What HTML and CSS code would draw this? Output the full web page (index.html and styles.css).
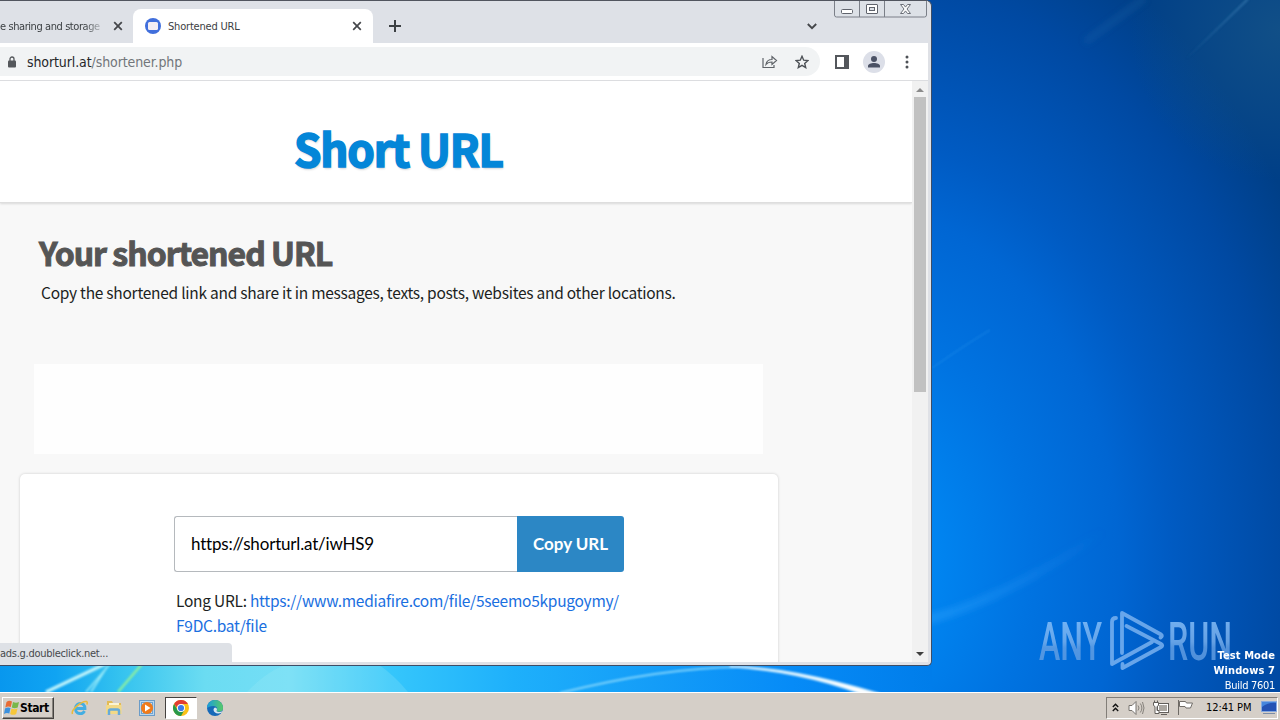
FILE: index.html
```html
<!DOCTYPE html>
<html lang="en">
<head>
  <meta charset="utf-8">
  <title>Shortened URL</title>
  <link rel="stylesheet" href="styles.css">
</head>
<body>
  <div class="desktop">
    <svg class="wallpaper" width="1280" height="692" viewBox="0 0 1280 692">
      <defs>
        <linearGradient id="strip" gradientUnits="userSpaceOnUse" x1="0" y1="0" x2="932" y2="0">
          <stop offset="0" stop-color="#0897ee"/>
          <stop offset="0.06" stop-color="#10a4f2"/>
          <stop offset="0.13" stop-color="#35c3ef"/>
          <stop offset="0.22" stop-color="#6bdcf2"/>
          <stop offset="0.31" stop-color="#74def6"/>
          <stop offset="0.42" stop-color="#35c6fb"/>
          <stop offset="0.55" stop-color="#1eb0fb"/>
          <stop offset="0.7" stop-color="#149df8"/>
          <stop offset="0.85" stop-color="#068bf7"/>
          <stop offset="1" stop-color="#007dea"/>
        </linearGradient>
        <radialGradient id="sky" gradientUnits="userSpaceOnUse" cx="0" cy="0" r="1" gradientTransform="translate(860 560) scale(517 704)">
          <stop offset="0" stop-color="#008af6"/>
          <stop offset="0.14" stop-color="#0085f1"/>
          <stop offset="0.33" stop-color="#0073e1"/>
          <stop offset="0.5" stop-color="#0066d3"/>
          <stop offset="0.6" stop-color="#005bc3"/>
          <stop offset="0.83" stop-color="#0049a2"/>
          <stop offset="0.97" stop-color="#003f87"/>
        </radialGradient>
        <filter id="soft"><feGaussianBlur stdDeviation="0.8"/></filter>
        <filter id="softer" x="-20%" y="-20%" width="140%" height="140%"><feGaussianBlur stdDeviation="3"/></filter>
        <linearGradient id="beam" gradientUnits="userSpaceOnUse" x1="930" y1="0" x2="1105" y2="0">
          <stop offset="0" stop-color="#38a8ff"/>
          <stop offset="1" stop-color="#38a8ff" stop-opacity="0"/>
        </linearGradient>
        <linearGradient id="ray" gradientUnits="userSpaceOnUse" x1="1185" y1="60" x2="1248" y2="0">
          <stop offset="0" stop-color="#4b8fc3" stop-opacity="0"/>
          <stop offset="1" stop-color="#4b8fc3"/>
        </linearGradient>
        <radialGradient id="corner" gradientUnits="userSpaceOnUse" cx="1280" cy="30" r="150">
          <stop offset="0" stop-color="#155387" stop-opacity="0.8"/>
          <stop offset="1" stop-color="#155387" stop-opacity="0"/>
        </radialGradient>
      </defs>
      <rect width="1280" height="692" fill="url(#sky)"/>
      <rect x="0" y="660" width="932" height="32" fill="url(#strip)"/>
      <rect x="1130" y="0" width="150" height="180" fill="url(#corner)"/>
      <g fill="none" filter="url(#softer)">
        <path d="M1085 42 L1145 -2" stroke="#3b87bd" stroke-width="6" opacity="0.18"/>
        <path d="M925 620 Q1000 602 1110 528" stroke="url(#beam)" stroke-width="9" opacity="0.4"/>
      </g>
      <g fill="none" filter="url(#soft)">
        <path d="M1185 60 L1248 -1" stroke="url(#ray)" stroke-width="2" opacity="0.5"/>
        <path d="M932 368 Q965 345 990 330" stroke="#3aa5f2" stroke-width="1.5" opacity="0.25"/>
        <path d="M46 692 L105 664" stroke="#bff3fb" stroke-width="3.500"/>
        <path d="M86 692 L110 664 M91 692 L107 667" stroke="#9cecf8" stroke-width="1.500"/>
        <path d="M118 692 L142 664" stroke="#8df0a0" stroke-width="2.500"/>
        <path d="M560 693 Q660 668 740 667" stroke="#7fd3fc" stroke-width="2"/>
        <path d="M730 666.500 Q790 667 880 694 L862 694 Q800 671 730 666.500" fill="#fff" stroke="#dff5ff" stroke-width="1.500"/>
      </g>
      <path d="M247 692 Q270 668 290 664 L378 664 Q395 676 408 692 Z" fill="#a5ecf8" opacity="0.22"/>
    </svg>

    <div class="window">
      <div class="tabstrip">
        <div class="tab tab-left">
          <span class="tab-title faded">e sharing and storage</span>
          <svg width="10" height="10" viewBox="0 0 10 10"><path d="M1.2 1.2l7.6 7.6M8.8 1.2l-7.6 7.6" stroke="#45474b" stroke-width="1.8"/></svg>
        </div>
        <div class="tab tab-active">
          <svg width="16" height="16" viewBox="0 0 16 16"><circle cx="8" cy="8" r="8" fill="#416fdc"/><rect x="3" y="4" width="10" height="8" rx="1.5" fill="#f4eef4"/></svg>
          <span class="tab-title">Shortened URL</span>
          <svg width="10" height="10" viewBox="0 0 10 10"><path d="M1.2 1.2l7.6 7.6M8.8 1.2l-7.6 7.6" stroke="#45474b" stroke-width="1.7"/></svg>
        </div>
        <svg class="new-tab" width="12" height="12" viewBox="0 0 12 12"><path d="M6 0v12M0 6h12" stroke="#3c4043" stroke-width="2"/></svg>
        <svg class="tab-search" width="10" height="7" viewBox="0 0 10 7"><path d="M.8 1L5 5.2 9.2 1" fill="none" stroke="#45474b" stroke-width="1.9"/></svg>
        <svg class="caption" width="94" height="18" viewBox="0 0 94 18">
          <path d="M.5 0v15q0 2 2 2h88q2 0 2-2V0M25.500 0v17M50.500 0v17" fill="#dde1e7" stroke="#7b7f88"/>
          <rect x="7.500" y="9.500" width="11" height="4" rx="1" fill="#fff" stroke="#5f636c"/>
          <path d="M32.500 5q0-.5.500-.500h10q.5 0 .5.500v8q0 .5-.5.500h-10q-.5 0-.5-.5z" fill="#fff" stroke="#5f636c"/>
          <rect x="35.500" y="7.500" width="5" height="3" fill="#dde1e7" stroke="#5f636c"/>
          <path d="M66.500 4.500h3l2 2.600 2-2.600h3l-3.500 4.500 3.500 4.500h-3l-2-2.600-2 2.600h-3l3.500-4.500z" fill="#fff" stroke="#6b6f78"/>
        </svg>
      </div>

      <div class="toolbar">
        <div class="omnibox">
          <svg width="8" height="12" viewBox="0 0 8 12"><path d="M2 5V3a2 2 0 0 1 4 0v2" fill="none" stroke="#54575b" stroke-width="1.3"/><rect y="4.500" width="8" height="7" rx="1" fill="#54575b"/></svg>
          <span class="address"><b>shorturl.at</b>/shortener.php</span>
          <svg class="share" width="16" height="14" viewBox="0 0 16 14"><path d="M1 3v9.500h11V10M4 9.500c.5-3.500 2.500-5 6-5V1.500l4.500 4L10 9.500V7C7 7 5.500 7.600 4 9.500z" fill="none" stroke="#5f6368" stroke-width="1.200"/></svg>
          <svg width="14" height="14" viewBox="0 0 14 14"><path d="M7 1.300l1.700 3.900 4.200.4-3.200 2.800 1 4.200L7 10.400l-3.700 2.200 1-4.200L1.100 5.600l4.200-.4z" fill="none" stroke="#4d5156" stroke-width="1.400"/></svg>
        </div>
        <svg class="panel" width="14" height="14" viewBox="0 0 14 14"><rect x="1" y="1" width="12" height="12" fill="#fff" stroke="#54575c" stroke-width="2"/><path d="M9 1h4v12H9z" fill="#54575c"/></svg>
        <svg class="profile" width="22" height="22" viewBox="0 0 22 22"><circle cx="11" cy="11" r="11" fill="#dcdfe8"/><circle cx="11" cy="8" r="3" fill="#4b5265"/><path d="M5 16.500v-1.500c0-2 3-3 6-3s6 1 6 3v1.500z" fill="#4b5265"/></svg>
        <svg class="menu" width="4" height="14" viewBox="0 0 4 14"><g fill="#4d5156"><circle cx="2" cy="2" r="1.500"/><circle cx="2" cy="7" r="1.500"/><circle cx="2" cy="12" r="1.500"/></g></svg>
      </div>

      <div class="viewport">
        <div class="page">
          <header class="site-header"><span class="logo">Short URL</span></header>
          <main>
            <h1>Your shortened URL</h1>
            <p class="intro">Copy the shortened link and share it in messages, texts, posts, websites and other locations.</p>
            <div class="ad"></div>
            <section class="card">
              <div class="copy-form">
                <div class="short-link">https://shorturl.at/iwHS9</div>
                <div class="copy-button">Copy URL</div>
              </div>
              <p class="long">Long URL: <a>https://www.mediafire.com/file/5seemo5kpugoymy/<br>F9DC.bat/file</a></p>
            </section>
          </main>
        </div>
        <div class="scrollbar">
          <svg width="8" height="4" viewBox="0 0 8 4"><path d="M0 4l4-4 4 4z" fill="#8b8b8b"/></svg>
          <div class="thumb"></div>
          <svg class="down" width="8" height="4" viewBox="0 0 8 4"><path d="M0 0l4 4 4-4z" fill="#3f3f3f"/></svg>
        </div>
        <div class="status">ads.g.doubleclick.net...</div>
      </div>
    </div>

    <svg class="watermark" width="194" height="64" viewBox="0 0 194 64">
      <defs><linearGradient id="wm" x1="0" y1="0" x2="0" y2="1"><stop offset="0.2" stop-color="#8dc3fa"/><stop offset="0.5" stop-color="#7fb5ef"/><stop offset="0.6" stop-color="#68a3e5"/><stop offset="1" stop-color="#619de1"/></linearGradient></defs>
      <g class="wm-text" fill="url(#wm)">
        <text x="1" y="51.500" textLength="63" lengthAdjust="spacingAndGlyphs">ANY</text>
        <text x="130" y="51.500" textLength="64" lengthAdjust="spacingAndGlyphs">RUN</text>
      </g>
      <g fill="none" stroke="#81b7f2" stroke-width="3.800" stroke-linejoin="round" stroke-linecap="round">
        <path d="M84 45V5l39 21.500q2 1.500-.5 3"/>
        <path d="M88.500 18L123 36q2.500 1.500 0 3L84.500 60v-4"/>
        <path d="M78 10q-4 0-4 4v42l40-22"/>
      </g>
    </svg>
    <div class="build"><b>Test Mode</b><b>Windows 7</b><span>Build 7601</span></div>

    <div class="taskbar">
      <div class="start">
        <svg width="16" height="16" viewBox="0 0 16 16"><path d="M2.500 2Q5 0 8 1.500L6.800 7Q4 5.800 1.300 7.500z" fill="#e86b34"/><path d="M9 2q3 1.500 6 0l-1.300 5.500Q10.500 9 7.800 7.500z" fill="#79b74a"/><path d="M1 8.500Q3.500 7 6.500 8L5.300 13.500Q2.500 12.300 0 14z" fill="#3c91de"/><path d="M7.500 8.500q3 1.500 6 0L12.200 14q-3 1.700-6 0z" fill="#f6c73a"/></svg>
        <b>Start</b>
      </div>
      <div class="launch">
        <svg width="18" height="18" viewBox="0 0 18 18"><path d="M4.500 9.500h9.500c0-7-9.500-6.500-9.500 0 0 6 7 6.500 9 2.500" fill="none" stroke="#43aee2" stroke-width="2.800"/><path d="M1.500 15C-.5 11 11 1.500 15.500 2.500c1.200.4.8 2 .2 3" fill="none" stroke="#e9ba3b" stroke-width="1.500"/></svg>
        <svg width="16" height="16" viewBox="0 0 16 16"><path d="M1 1h5l1 2h8v10H1z" fill="#e3bb55"/><path d="M3 3h10v6H3z" fill="#fbf4d4"/><path d="M0 5h15.500v9H0z" fill="#f3d987"/><path d="M3 15v-4q0-1.500 1.500-1.500h7Q13 9.500 13 11v4" fill="none" stroke="#67aad9" stroke-width="2.500"/></svg>
        <svg width="16" height="16" viewBox="0 0 16 16"><rect x=".5" y=".5" width="15" height="15" fill="#b9d7ee" stroke="#6b9cc8"/><rect x="2.500" y="2.500" width="11" height="11" fill="#d7e8f4" stroke="#6fa2cf"/><circle cx="8" cy="8" r="6" fill="#f07b1b"/><path d="M6 4.500l5.500 3.500L6 11.500z" fill="#fff"/></svg>
        <div class="running">
          <svg width="16" height="16" viewBox="0 0 16 16"><circle cx="8" cy="8" r="8" fill="#fbc116"/><path d="M1.070 4A8 8 0 0 1 14.930 4H8v8z" fill="#e23d32"/><path d="M1.070 4A8 8 0 0 0 8 16l3.460-6L8 8 4.540 10z" fill="#29994b"/><circle cx="8" cy="8" r="4" fill="#fff"/><circle cx="8" cy="8" r="3.100" fill="#3e7ce8"/></svg>
        </div>
        <svg class="edge" width="16" height="16" viewBox="0 0 16 16"><defs><linearGradient id="eg"><stop offset="0" stop-color="#1a9ddd"/><stop offset="1" stop-color="#58ca66"/></linearGradient></defs><circle cx="8" cy="8" r="8" fill="#1669b8"/><path d="M0 8a8 8 0 0 1 16 0c0 4-5 4.500-6.500 3 1.500-2 .5-5-3-5S1 7.500 0 8z" fill="url(#eg)"/><path d="M9.500 11c1 1.200 4 1.300 6 .2l-1 1.600C11 14 7 13.500 6.500 10c0-1 .5-2 1.500-2.500 2 .3 2.500 2 1.500 3.500z" fill="#d6e6f0"/></svg>
      </div>
      <div class="tray">
        <svg width="7" height="9" viewBox="0 0 7 9"><path d="M.8 4l2.700-2.700L6.200 4M.8 8l2.700-2.700L6.200 8" fill="none" stroke="#111" stroke-width="1.400"/></svg>
        <svg class="sound" width="17" height="14" viewBox="0 0 17 14"><path d="M1 4.500h3l4-4v13l-4-4H1z" fill="#fff" stroke="#77736e"/><path d="M10 4.500q2 2.500 0 5M12.300 2.500q3.200 4.500 0 9M14.500 1q3 6 0 12" fill="none" stroke="#84807a"/></svg>
        <svg class="net" width="16" height="16" viewBox="0 0 16 16"><rect x="4.500" y="3.500" width="11" height="9" fill="#aaa6a0" stroke="#625f5b"/><rect x="5.500" y="4.500" width="9" height="7" fill="none" stroke="#fff"/><path d="M.5 2.500h5v3l-1.500 1v4h2v3H2v-7l-1.500-1zM1.500.5v2M4.500.5v2M8 14.500h6" fill="#fff" stroke="#625f5b"/></svg>
        <svg class="flag" width="16" height="15" viewBox="0 0 16 15"><path d="M1.500 0v15" stroke="#6e6a65"/><path d="M2.500 1.500h6l1 1.500h6l-2 5H9L8 6.500H2.500z" fill="#fff" stroke="#716d68"/></svg>
        <span class="clock">12:41 PM</span>
        <svg width="16" height="14" viewBox="0 0 16 14"><path d="M.5.500h15v10H.5z" fill="#2452b4" stroke="#86a9df"/><path d="M1 6Q8 1 15 2v-1H1z" fill="#4686dd"/><path d="M2 12.500h12" stroke="#7b8da7"/></svg>
      </div>
    </div>
  </div>
</body>
</html>
```

FILE: styles.css
```css
* {
  box-sizing: border-box;
}
body {
  margin: 0;
  font-family: "DejaVu Sans Condensed", "DejaVu Sans", sans-serif;
}
svg {
  display: block;
  flex: none;
}
.desktop {
  position: relative;
  display: flex;
  flex-direction: column;
  justify-content: flex-end;
  width: 1280px;
  height: 720px;
  overflow: hidden;
}
.wallpaper {
  position: absolute;
  left: 0;
  top: 0;
}

/* browser window */
.window {
  position: absolute;
  left: 0;
  top: 0;
  display: flex;
  flex-direction: column;
  width: 932px;
  height: 666px;
  padding: 0 3px 3px 0;
  background: #dfe1e6;
  border: solid #3d4d66;
  border-width: 1px 1px 1px 0;
  border-top-color: #51555f;
  border-radius: 0 6px 5px 0;
  overflow: hidden;
  white-space: nowrap;
}
.tabstrip {
  display: flex;
  height: 42px;
  background: #dee1e7;
}
.tab {
  display: flex;
  align-items: center;
  height: 34px;
  margin-top: 8px;
  color: #3c4043;
  font-size: 11px;
}
.tab-left {
  width: 133px;
  gap: 9px;
}
.tab-title {
  flex: 1;
  letter-spacing: -0.2px;
}
.faded {
  flex: none;
  width: 104px;
  overflow: hidden;
  letter-spacing: -0.42px;
  -webkit-mask-image: linear-gradient(to right, #000 84px, transparent 106px);
  mask-image: linear-gradient(to right, #000 84px, transparent 106px);
}
.tab-active {
  width: 240px;
  padding: 0 11px 0 12px;
  gap: 7px;
  background: #fff;
  border-radius: 8px 8px 0 0;
}
.new-tab {
  margin: 19px 0 0 16px;
}
.tab-search {
  margin: 22px 0 0 auto;
}
.caption {
  margin: -1px 0 0 17px;
}
.toolbar {
  display: flex;
  align-items: center;
  height: 38px;
  background: #fff;
  border-bottom: 1px solid #dcdde0;
}
.omnibox {
  display: flex;
  align-items: center;
  width: 820px;
  height: 29px;
  padding: 0 11px 0 8px;
  background: #f1f3f4;
  border-radius: 0 15px 15px 0;
}
.address {
  flex: 1;
  margin-left: 11px;
  color: #72767a;
  font-size: 14px;
  letter-spacing: -0.1px;
}
.address b {
  color: #25272a;
  font-weight: normal;
}
.share {
  margin-right: 17px;
}
.panel {
  margin-left: 15px;
}
.profile {
  margin-left: 14px;
}
.menu {
  margin-left: 20px;
}

/* web page */
.viewport {
  position: relative;
  display: flex;
  flex: 1;
  overflow: hidden;
}
.page {
  width: 912px;
  background: #f8f8f8;
  font-family: "Noto Sans CJK SC", "Open Sans", sans-serif;
}
.site-header {
  height: 122px;
  padding: 33px 0 0 294px;
  background: #fff;
  border-bottom: 1px solid #dedede;
  box-shadow: 0 1px 2px rgba(0, 0, 0, 0.12);
}
.logo {
  display: block;
  color: #0486d8;
  font-size: 44px;
  font-weight: bold;
  line-height: 68px;
  letter-spacing: -1.15px;
  -webkit-text-stroke: 1.6px #0486d8;
  text-shadow: 1px 2px 2px rgba(0, 0, 0, 0.15);
}
main {
  padding: 24px 0 0 20px;
}
h1 {
  margin: 0 0 0 19px;
  color: #555;
  font-size: 32px;
  line-height: 50px;
  letter-spacing: -1px;
  -webkit-text-stroke: 1px #555;
}
.intro {
  margin: 3px 0 0 21px;
  color: #1c1f22;
  font-size: 15.5px;
  line-height: 24px;
  letter-spacing: -0.26px;
}
.ad {
  width: 729px;
  height: 90px;
  margin: 60px 0 20px 14px;
  background: #fefefe;
}
.card {
  width: 758px;
  height: 230px;
  padding: 42px 154px 0;
  background: #fff;
  border-radius: 5px 5px 0 0;
  box-shadow: 0 0 3px rgba(0, 0, 0, 0.18);
}
.copy-form {
  display: flex;
  height: 56px;
  font-family: Lato, sans-serif;
  font-size: 17px;
  line-height: 53px;
}
.short-link {
  width: 343px;
  padding-left: 16px;
  background: #fff;
  border: 1px solid #b5b9bd;
  border-right: 0;
  border-radius: 3px 0 0 3px;
  color: #000;
  letter-spacing: -0.18px;
}
.copy-button {
  width: 107px;
  padding-top: 1px;
  background: #2c87c5;
  border-radius: 0 3px 3px 0;
  color: #fff;
  font-weight: bold;
  letter-spacing: -0.05px;
  line-height: 54px;
  text-align: center;
}
.long {
  margin: 16px 0 0 2px;
  color: #1c1f22;
  font-size: 15.5px;
  line-height: 25px;
  letter-spacing: -0.26px;
}
.long a {
  color: #1a6fdf;
}
.scrollbar {
  display: flex;
  flex-direction: column;
  align-items: center;
  width: 16px;
  padding: 7px 0 6px;
  background: #f1f1f1;
}
.thumb {
  width: 12px;
  height: 295px;
  margin-top: 5px;
  background: #c1c1c1;
}
.down {
  margin-top: auto;
}
.status {
  position: absolute;
  left: 0;
  bottom: 0;
  width: 232px;
  height: 19px;
  background: #dee1e6;
  border-radius: 0 4px 0 0;
  color: #46494d;
  font-size: 11px;
  line-height: 21px;
  letter-spacing: -0.28px;
}

/* desktop overlays */
.watermark {
  position: absolute;
  left: 1038px;
  top: 608px;
  opacity: 0.8;
}
.wm-text {
  font-family: Roboto, sans-serif;
  font-size: 53px;
  font-weight: 500;
}
.build {
  position: absolute;
  right: 5px;
  top: 648px;
  display: flex;
  flex-direction: column;
  align-items: flex-end;
  color: #fff;
  font-size: 11px;
  line-height: 15px;
}
.build b {
  letter-spacing: 0.1px;
}
.build span {
  letter-spacing: -0.3px;
}

/* taskbar */
.taskbar {
  position: relative;
  display: flex;
  align-items: center;
  height: 28px;
  padding: 2px 2px 0;
  background: #d5cfc8;
  border-top: 1px solid #fff;
}
.start {
  display: flex;
  align-items: center;
  width: 52px;
  height: 22px;
  padding-left: 1px;
  border: 1px solid;
  border-color: #fff #45423f #45423f #fff;
  box-shadow: inset -1px -1px #88847e;
  color: #000;
  font-size: 12px;
  letter-spacing: -0.4px;
}
.launch {
  display: flex;
  align-items: center;
  margin-left: 17px;
  gap: 17px;
}
.running {
  display: flex;
  align-items: center;
  justify-content: center;
  width: 32px;
  height: 22px;
  margin: 0 -7px;
  background: #fff;
  border: 1px solid;
  border-color: #45423f #fff #fff #45423f;
}
.tray {
  display: flex;
  align-items: center;
  width: 172px;
  height: 22px;
  margin-left: auto;
  padding-left: 5px;
  border: 1px solid;
  border-color: #827e78 #fff #fff #827e78;
}
.sound {
  margin-left: 9px;
}
.net {
  margin-left: 8px;
}
.flag {
  margin-left: 8px;
}
.clock {
  flex: 1;
  margin-left: 13px;
  color: #000;
  font-size: 11px;
  letter-spacing: -0.1px;
}
```
